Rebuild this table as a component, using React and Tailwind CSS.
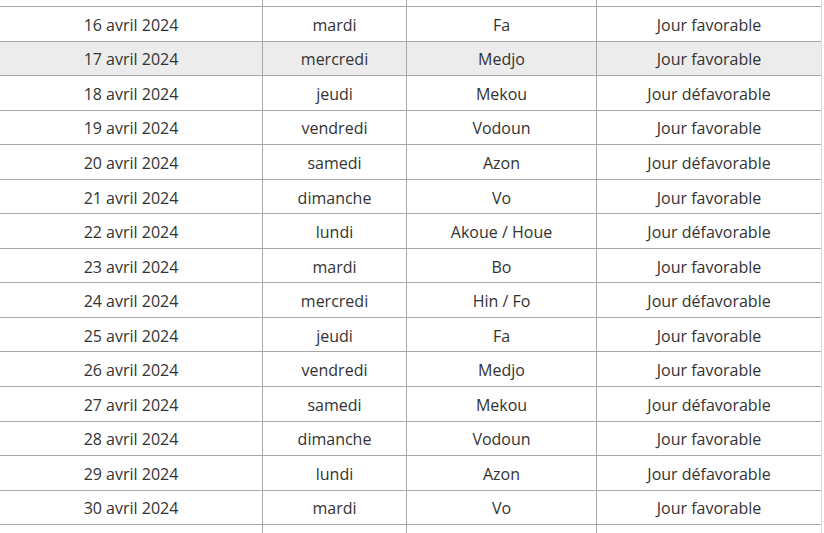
const rows = [
  ['', '', '', ''],
  ['16 avril 2024', 'mardi', 'Fa', 'Jour favorable'],
  ['17 avril 2024', 'mercredi', 'Medjo', 'Jour favorable', true],
  ['18 avril 2024', 'jeudi', 'Mekou', 'Jour défavorable'],
  ['19 avril 2024', 'vendredi', 'Vodoun', 'Jour favorable'],
  ['20 avril 2024', 'samedi', 'Azon', 'Jour défavorable'],
  ['21 avril 2024', 'dimanche', 'Vo', 'Jour favorable'],
  ['22 avril 2024', 'lundi', 'Akoue / Houe', 'Jour défavorable'],
  ['23 avril 2024', 'mardi', 'Bo', 'Jour favorable'],
  ['24 avril 2024', 'mercredi', 'Hin / Fo', 'Jour défavorable'],
  ['25 avril 2024', 'jeudi', 'Fa', 'Jour favorable'],
  ['26 avril 2024', 'vendredi', 'Medjo', 'Jour favorable'],
  ['27 avril 2024', 'samedi', 'Mekou', 'Jour défavorable'],
  ['28 avril 2024', 'dimanche', 'Vodoun', 'Jour favorable'],
  ['29 avril 2024', 'lundi', 'Azon', 'Jour défavorable'],
  ['30 avril 2024', 'mardi', 'Vo', 'Jour favorable'],
  ['', '', '', ''],
];

export default function App() {
  return (
    <div className="w-[824px] h-[533px] overflow-hidden bg-white">
      <div
        className="-mt-[27.55px] -ml-px w-[823px] border-r border-[#dcdcdc] text-[16px] text-[#333333]"
        style={{ fontFamily: '"Open Sans", sans-serif' }}
      >
        {rows.map(([date, day, name, kind, hl], i) => (
          <div
            key={i}
            className={`grid grid-cols-[263px_144px_190px_225px] h-[34.55px] border-b border-[#a8a8a8] ${hl ? 'bg-[#ececec]' : ''}`}
          >
            <div className="flex items-center justify-center pt-[2px] border-l border-[#a8a8a8]">{date}</div>
            <div className="flex items-center justify-center pt-[2px] border-l border-[#a8a8a8]">{day}</div>
            <div className="flex items-center justify-center pt-[2px] border-l border-[#a8a8a8]">{name}</div>
            <div className="flex items-center justify-center pt-[2px] border-l border-[#a8a8a8]">{kind}</div>
          </div>
        ))}
      </div>
    </div>
  );
}
